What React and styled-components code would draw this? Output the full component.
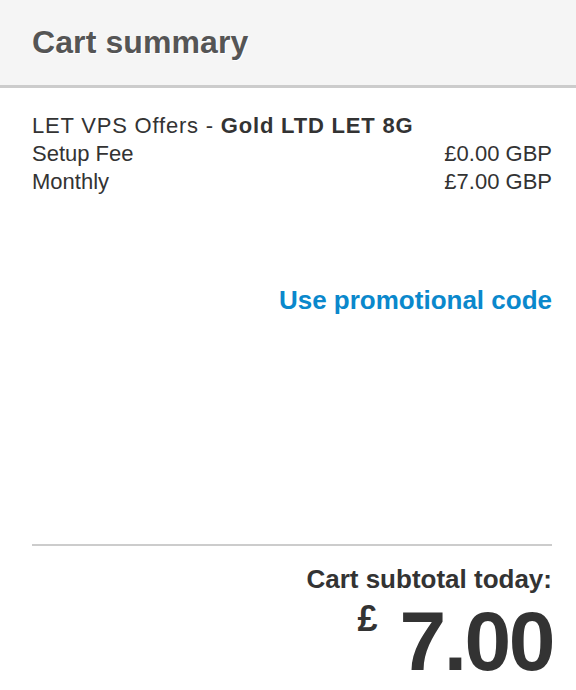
import React from 'react'
import styled, { createGlobalStyle } from 'styled-components'

const GlobalStyle = createGlobalStyle`
  html, body {
    margin: 0;
    padding: 0;
    background: #fff;
  }
  body {
    font-family: 'Liberation Sans', Arial, sans-serif;
    color: #333;
  }
`

const Panel = styled.section`
  width: 576px;
  height: 690px;
  display: flex;
  flex-direction: column;
  overflow: hidden;
`

const Header = styled.header`
  height: 88px;
  box-sizing: border-box;
  background: #f5f5f5;
  border-bottom: 3px solid #cccccc;
  display: flex;
  align-items: center;
  padding: 0 32px;

  h2 {
    margin: 0;
    font-size: 32px;
    font-weight: bold;
    letter-spacing: 0.1px;
    color: #555;
    text-shadow: 1px 1px 0 #fff;
  }
`

const Body = styled.div`
  flex: 1;
  display: flex;
  flex-direction: column;
  padding: 24px 24px 0 32px;
`

const ProductName = styled.div`
  font-size: 22px;
  line-height: 28px;
  letter-spacing: 0.8px;

  b {
    font-weight: bold;
  }
`

const PriceRow = styled.div`
  display: flex;
  justify-content: space-between;
  font-size: 22px;
  line-height: 28px;
`

const PromoLink = styled.a`
  align-self: flex-end;
  margin-top: 89px;
  font-size: 26px;
  font-weight: bold;
  color: #0a88cc;
  text-decoration: none;
  cursor: pointer;
`

const Divider = styled.hr`
  margin: 228px 0 0 0;
  border: 0;
  border-top: 2px solid #cccccc;
`

const Total = styled.div`
  display: flex;
  flex-direction: column;
  align-items: flex-end;
  padding-top: 18px;
`

const TotalLabel = styled.div`
  font-size: 26px;
  font-weight: bold;
  color: #333;
`

const Amount = styled.div`
  display: flex;
  align-items: flex-start;
  gap: 22px;
  color: #333;
  font-weight: bold;
  margin-top: 4px;
`

const Currency = styled.span`
  font-size: 36px;
  line-height: 36px;
  margin-top: 2px;
`

const Value = styled.span`
  font-size: 84px;
  line-height: 84px;
  letter-spacing: -2.5px;
  margin-right: -1px;
`

export default function App() {
  return (
    <>
      <GlobalStyle />
      <Panel>
        <Header>
          <h2>Cart summary</h2>
        </Header>
        <Body>
          <ProductName>
            LET VPS Offers - <b>Gold LTD LET 8G</b>
          </ProductName>
          <PriceRow>
            <span>Setup Fee</span>
            <span>£0.00 GBP</span>
          </PriceRow>
          <PriceRow>
            <span>Monthly</span>
            <span>£7.00 GBP</span>
          </PriceRow>
          <PromoLink>Use promotional code</PromoLink>
          <Divider />
          <Total>
            <TotalLabel>Cart subtotal today:</TotalLabel>
            <Amount>
              <Currency>£</Currency>
              <Value>7.00</Value>
            </Amount>
          </Total>
        </Body>
      </Panel>
    </>
  )
}
